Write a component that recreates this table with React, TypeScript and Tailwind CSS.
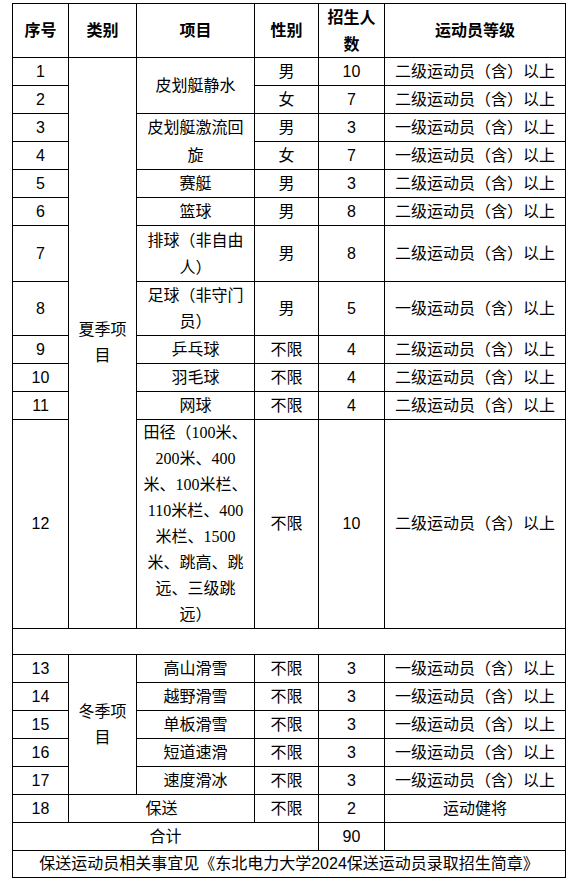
import React from "react";

const ff = { fontFamily: "'Liberation Sans', 'Noto Sans CJK SC', sans-serif" };

function C({ children, className = "" }: { children?: React.ReactNode; className?: string }) {
  return (
    <div className={"bg-white flex items-center justify-center text-center text-[16px] leading-[26px] text-black " + className}>
      <div>{children}</div>
    </div>
  );
}

function H({ children }: { children: React.ReactNode }) {
  return (
    <div className="bg-white flex items-center justify-center text-center text-[16px] leading-[27px] font-bold text-black">
      <div>{children}</div>
    </div>
  );
}

const L2 = "二级运动员（含）以上";
const L1 = "一级运动员（含）以上";

export default function App() {
  return (
    <div className="w-[578px] h-[882px] bg-white pt-[3px] pl-[12px]" style={ff}>
      <div className="w-[554px] grid gap-px p-px bg-black grid-cols-[55px_67px_117px_63px_65px_180px] grid-rows-[53px_27px_27px_27px_27px_27px_27px_55px_53px_27px_27px_27px_208px_25px_27px_27px_27px_27px_27px_27px_27px_26px]">
        <H>序号</H>
        <H>类别</H>
        <H>项目</H>
        <H>性别</H>
        <H>招生人<br />数</H>
        <H>运动员等级</H>

        {/* row 1 */}
        <C>1</C>
        <C className="row-span-12">夏季项<br />目</C>
        <C className="row-span-2">皮划艇静水</C>
        <C>男</C>
        <C>10</C>
        <C>{L2}</C>
        {/* row 2 */}
        <C>2</C>
        <C>女</C>
        <C>7</C>
        <C>{L2}</C>
        {/* row 3 */}
        <C>3</C>
        <C className="row-span-2 leading-[28px]">皮划艇激流回<br />旋</C>
        <C>男</C>
        <C>3</C>
        <C>{L1}</C>
        {/* row 4 */}
        <C>4</C>
        <C>女</C>
        <C>7</C>
        <C>{L1}</C>
        {/* row 5 */}
        <C>5</C>
        <C>赛艇</C>
        <C>男</C>
        <C>3</C>
        <C>{L2}</C>
        {/* row 6 */}
        <C>6</C>
        <C>篮球</C>
        <C>男</C>
        <C>8</C>
        <C>{L2}</C>
        {/* row 7 */}
        <C>7</C>
        <C className="leading-[27px]">排球（非自由<br />人）</C>
        <C>男</C>
        <C>8</C>
        <C>{L2}</C>
        {/* row 8 */}
        <C>8</C>
        <C className="leading-[26px]">足球（非守门<br />员）</C>
        <C>男</C>
        <C>5</C>
        <C>{L1}</C>
        {/* row 9 */}
        <C>9</C>
        <C>乒乓球</C>
        <C>不限</C>
        <C>4</C>
        <C>{L2}</C>
        {/* row 10 */}
        <C>10</C>
        <C>羽毛球</C>
        <C>不限</C>
        <C>4</C>
        <C>{L2}</C>
        {/* row 11 */}
        <C>11</C>
        <C>网球</C>
        <C>不限</C>
        <C>4</C>
        <C>{L2}</C>
        {/* row 12 */}
        <C>12</C>
        <div
          className="bg-white flex items-center justify-center text-center text-[16px] leading-[26px] text-black"
          style={{ fontFamily: "'Liberation Serif', 'Noto Sans CJK SC', serif" }}
        >
          <div>
            田径（100米、<br />
            200米、400<br />
            米、100米栏、<br />
            110米栏、400<br />
            米栏、1500<br />
            米、跳高、跳<br />
            远、三级跳<br />
            远）
          </div>
        </div>
        <C>不限</C>
        <C>10</C>
        <C>{L2}</C>
        {/* empty row */}
        <div className="bg-white col-span-6"></div>
        {/* row 13 */}
        <C>13</C>
        <C className="row-span-5">冬季项<br />目</C>
        <C>高山滑雪</C>
        <C>不限</C>
        <C>3</C>
        <C>{L1}</C>
        <C>14</C>
        <C>越野滑雪</C>
        <C>不限</C>
        <C>3</C>
        <C>{L1}</C>
        <C>15</C>
        <C>单板滑雪</C>
        <C>不限</C>
        <C>3</C>
        <C>{L1}</C>
        <C>16</C>
        <C>短道速滑</C>
        <C>不限</C>
        <C>3</C>
        <C>{L1}</C>
        <C>17</C>
        <C>速度滑冰</C>
        <C>不限</C>
        <C>3</C>
        <C>{L1}</C>
        {/* row 18 */}
        <C>18</C>
        <C className="col-span-2">保送</C>
        <C>不限</C>
        <C>2</C>
        <C>运动健将</C>
        {/* total */}
        <C className="col-span-4">合计</C>
        <C>90</C>
        <C></C>
        {/* footer */}
        <C className="col-span-6">保送运动员相关事宜见《东北电力大学2024保送运动员录取招生简章》</C>
      </div>
    </div>
  );
}
